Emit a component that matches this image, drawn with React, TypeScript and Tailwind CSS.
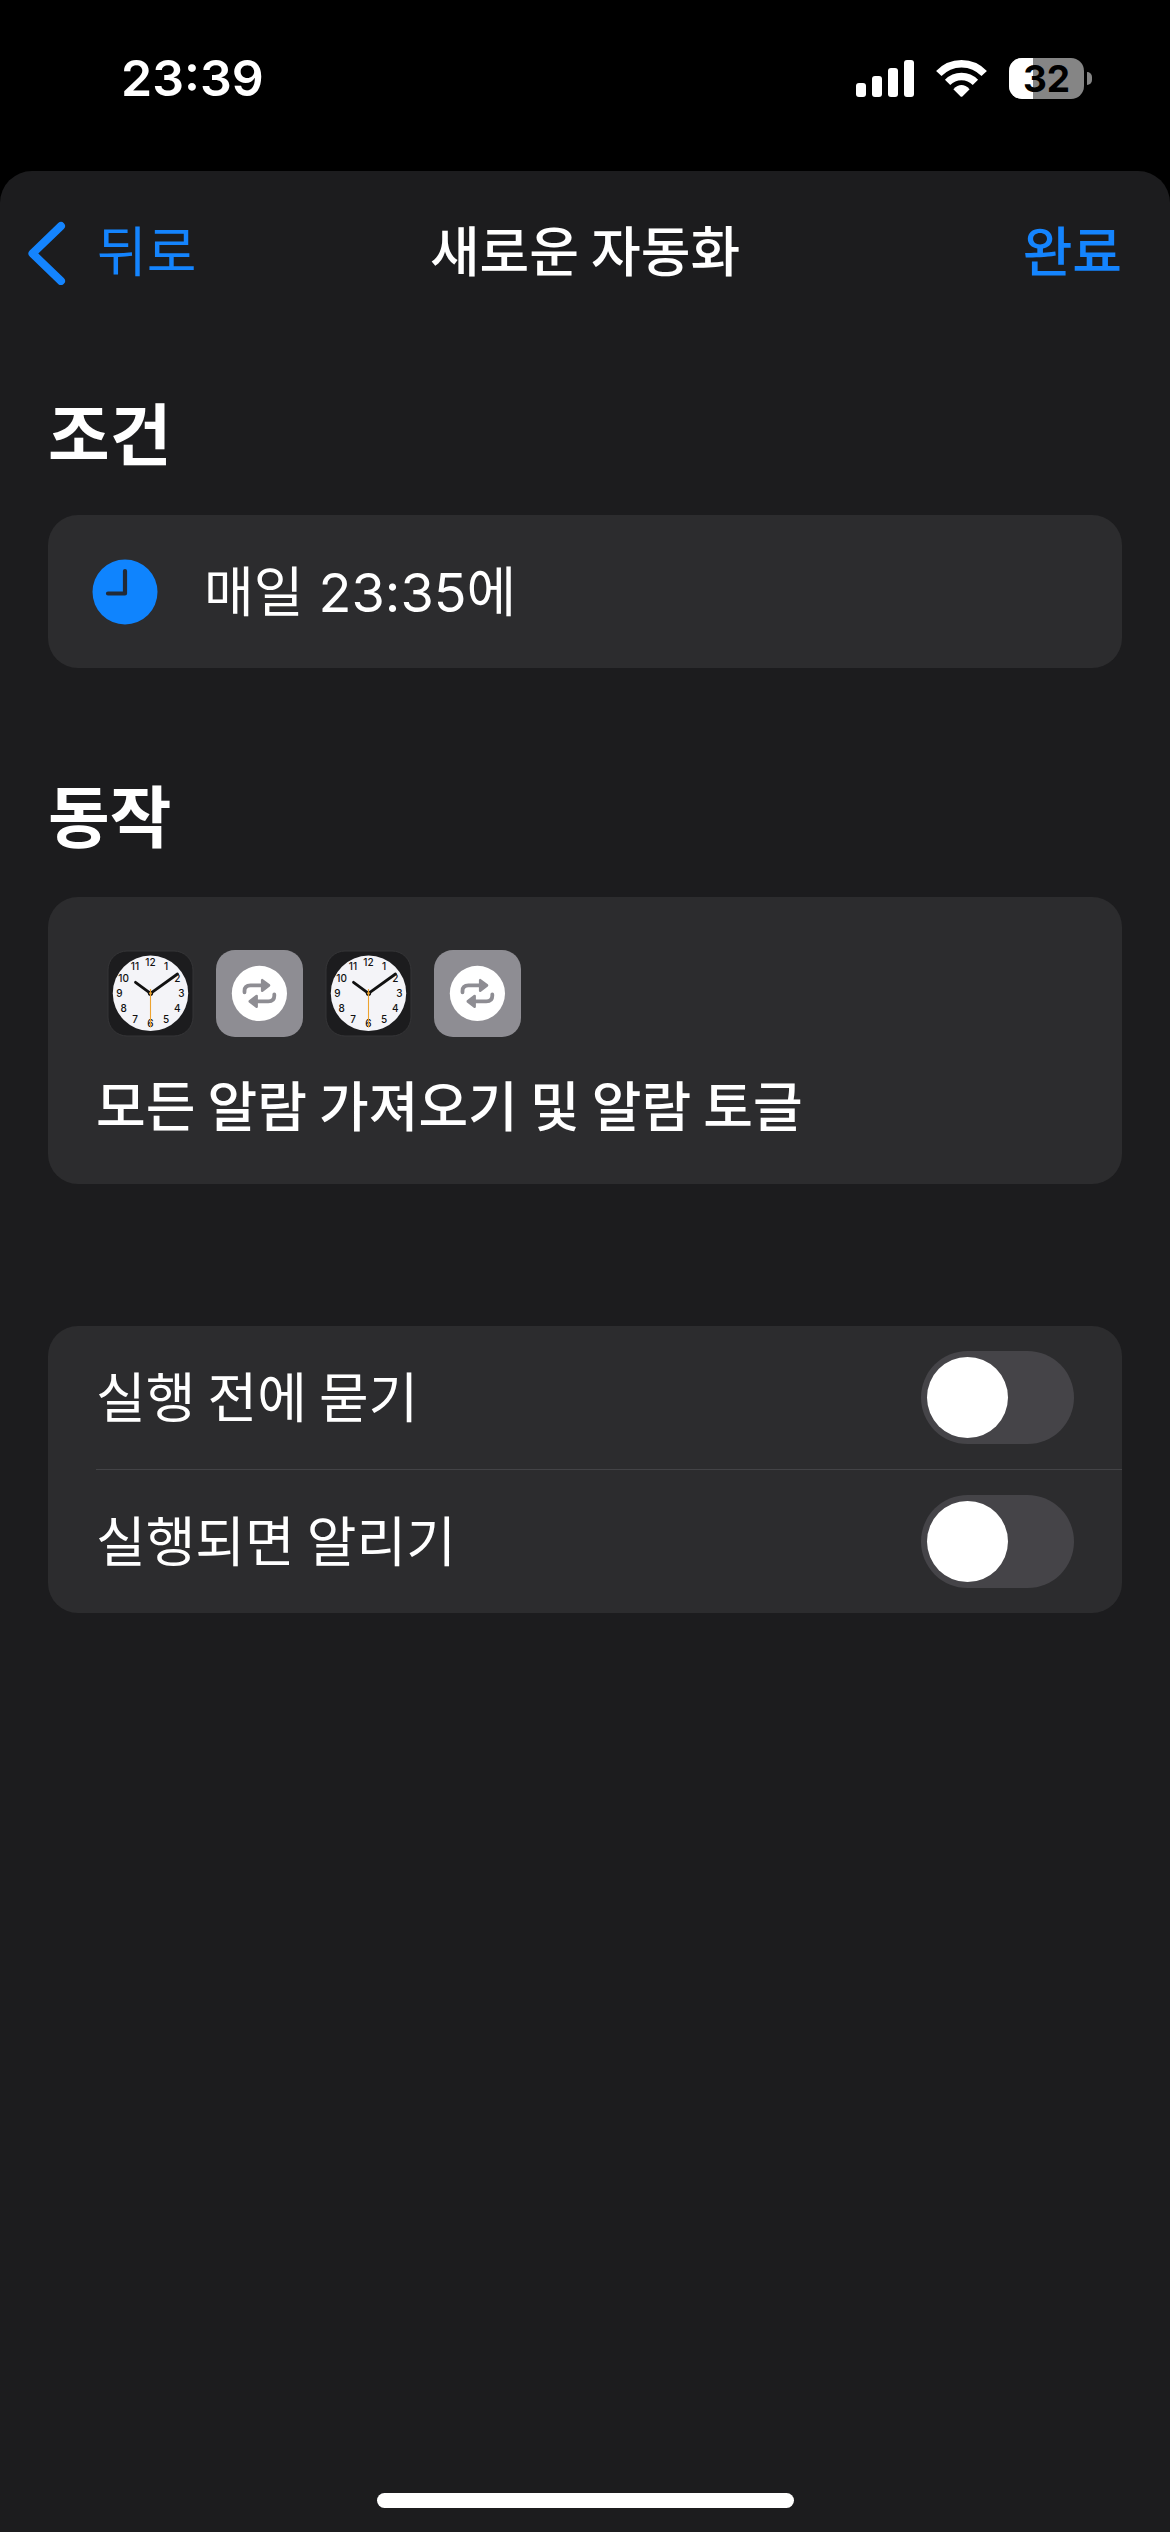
import { useState } from "react";

const HOURS = [1, 2, 3, 4, 5, 6, 7, 8, 9, 10, 11, 12];

function StatusBar() {
  return (
    <header className="flex h-[171px] items-start justify-between bg-black pt-[54px] pr-[78px] pl-[121px]">
      <time className="font-[Inter,sans-serif] text-[50px] leading-[48px] font-semibold">23:39</time>

      <div className="flex h-12 items-center">
        <div className="flex h-[37px] items-end gap-1.5">
          <span className="h-[14px] w-2.5 rounded-[3px] bg-white" />
          <span className="h-[21px] w-2.5 rounded-[3px] bg-white" />
          <span className="h-[29px] w-2.5 rounded-[3px] bg-white" />
          <span className="h-[37px] w-2.5 rounded-[3px] bg-white" />
        </div>

        <svg className="ml-[22px] h-[37px] w-[51px]" viewBox="0 0 51 37" fill="none" aria-label="Wi-Fi">
          <path d="M2.8 13.6A31 31 0 0 1 48.2 13.6" stroke="#fff" strokeWidth="7.4" />
          <path d="M11.6 22.4A19.4 19.4 0 0 1 39.4 22.4" stroke="#fff" strokeWidth="7.4" />
          <path d="M17.4 29.2Q25.5 20.8 33.6 29.2L26.4 36.4Q25.5 37.2 24.6 36.4Z" fill="#fff" />
        </svg>

        <div className="ml-[22px] flex items-center gap-[3px]">
          <div className="relative flex h-[41px] w-[75px] items-center justify-center rounded-[13px] bg-[#858585]">
            <span className="absolute inset-y-0 left-0 w-6 rounded-l-[13px] bg-white" />
            <span className="relative font-[Inter,sans-serif] text-[37px] leading-[41px] font-bold text-black">32</span>
          </div>
          <span className="h-[13px] w-[5px] rounded-r-full bg-[#858585]" />
        </div>
      </div>
    </header>
  );
}

function NavBar() {
  return (
    <nav className="grid h-[162px] grid-cols-[1fr_auto_1fr] items-center px-7 text-[54px] leading-[64px]">
      <button type="button" className="flex items-center gap-[31px] justify-self-start text-[#1484fe]">
        <svg className="h-[66px] w-[38px]" viewBox="0 0 38 66" fill="none" aria-hidden="true">
          <path d="M33 7L4.500 34.500L33 62" stroke="currentColor" strokeWidth="8" strokeLinecap="round" strokeLinejoin="round" />
        </svg>
        <span className="pb-1.5">뒤로</span>
      </button>
      <h1 className="pb-1.5 font-medium">새로운 자동화</h1>
      <button type="button" className="mr-5 justify-self-end pb-1.5 font-medium text-[#1484fe]">
        완료
      </button>
    </nav>
  );
}

function TimeIcon() {
  return (
    <svg className="size-[66px]" viewBox="0 0 66 66" fill="none" aria-hidden="true">
      <circle cx="33" cy="33" r="32.5" fill="#0f84fe" />
      <path d="M33 12V34.500H16" stroke="#222a36" strokeWidth="4.200" strokeLinecap="round" strokeLinejoin="round" />
    </svg>
  );
}

function ClockTile() {
  return (
    <svg className="size-[87px]" viewBox="0 0 87 87" aria-label="시계">
      <rect x="1" y="1" width="85" height="85" rx="19" fill="#1c1c1e" stroke="#353537" strokeWidth="1" />
      <circle cx="43.500" cy="43.300" r="37.700" fill="#f4f4f8" />
      <g className="font-[Inter,sans-serif]" fontSize="10" fontWeight="500" fill="#111" textAnchor="middle">
        {HOURS.map((hour) => {
          const angle = (hour * Math.PI) / 6;
          return (
            <text key={hour} x={43.5 + 31 * Math.sin(angle)} y={46.9 - 30.5 * Math.cos(angle)}>
              {hour}
            </text>
          );
        })}
      </g>
      <g stroke="#111" strokeLinecap="round">
        <path d="M43.500 43.300L28.500 32.300" strokeWidth="2.800" />
        <path d="M43.500 43.300L70.500 24" strokeWidth="2.800" />
      </g>
      <circle cx="43.500" cy="43.300" r="2.600" fill="#111" />
      <path d="M43.500 39V77.500" stroke="#eda32f" strokeWidth="1.100" />
      <circle cx="43.500" cy="43.300" r="1.300" fill="#eda32f" />
    </svg>
  );
}

function RepeatTile() {
  return (
    <svg className="size-[87px]" viewBox="0 0 87 87" fill="none" aria-label="반복">
      <rect width="87" height="87" rx="19" fill="#8e8d93" />
      <circle cx="43.400" cy="43.400" r="27.600" fill="#fff" />
      <g stroke="#8e8d93" strokeLinecap="round" strokeLinejoin="round">
        <path d="M28.500 42.300V41Q28.500 35.400 34.500 35.400H46" strokeWidth="3.800" />
        <path d="M46.200 30.200V40.700L53 35.400Z" fill="#8e8d93" strokeWidth="2.600" />
        <path d="M58.300 44.500V45.800Q58.300 51.400 52.300 51.400H40.800" strokeWidth="3.800" />
        <path d="M40.600 56.600V46.100L33.800 51.400Z" fill="#8e8d93" strokeWidth="2.600" />
      </g>
    </svg>
  );
}

function ToggleRow({ id, label }: { id: string; label: string }) {
  const [on, setOn] = useState(false);

  return (
    <div className="flex h-[143px] items-center justify-between pr-12">
      <label htmlFor={id} className="pb-1.5 text-[54px] leading-[64px]">
        {label}
      </label>
      <input
        id={id}
        type="checkbox"
        role="switch"
        checked={on}
        onChange={(e) => setOn(e.target.checked)}
        className="h-[93px] w-[153px] appearance-none rounded-full bg-[#454448] p-1.5 before:block before:size-[81px] before:rounded-full before:bg-white checked:bg-[#30d158] checked:before:translate-x-[60px]"
      />
    </div>
  );
}

export default function App() {
  return (
    <div className="flex min-h-screen flex-col bg-black font-['Noto_Sans_CJK_KR',sans-serif] text-white">
      <StatusBar />

      <div className="flex flex-1 flex-col rounded-t-[32px] bg-[#1c1c1e]">
        <NavBar />

        <main className="flex-1 px-12 pt-[58px]">
          <section>
            <h2 className="text-[67px] leading-[80px] font-bold">조건</h2>
            <div className="mt-11 flex h-[153px] items-center gap-[46px] rounded-[30px] bg-[#2c2c2e] pl-11">
              <TimeIcon />
              <p className="pb-0.5 text-[54px] leading-[64px]">
                매일<span className="font-[Inter,sans-serif]"> 23:35</span>에
              </p>
            </div>
          </section>

          <section className="mt-[105px]">
            <h2 className="text-[67px] leading-[80px] font-bold">동작</h2>
            <div className="mt-11 rounded-[30px] bg-[#2c2c2e] px-12 pt-[53px] pb-12">
              <div className="flex gap-[22px] pl-[11px]">
                <ClockTile />
                <RepeatTile />
                <ClockTile />
                <RepeatTile />
              </div>
              <p className="mt-[35px] text-[54px] leading-[64px] font-medium">모든 알람 가져오기 및 알람 토글</p>
            </div>
          </section>

          <section className="mt-[142px] rounded-[30px] bg-[#2c2c2e] pl-12">
            <ToggleRow id="ask-before-running" label="실행 전에 묻기" />
            <div className="h-px bg-[#434346]" />
            <ToggleRow id="notify-when-run" label="실행되면 알리기" />
          </section>
        </main>

        <div className="mx-auto mb-6 h-[15px] w-[417px] rounded-full bg-white" />
      </div>
    </div>
  );
}
